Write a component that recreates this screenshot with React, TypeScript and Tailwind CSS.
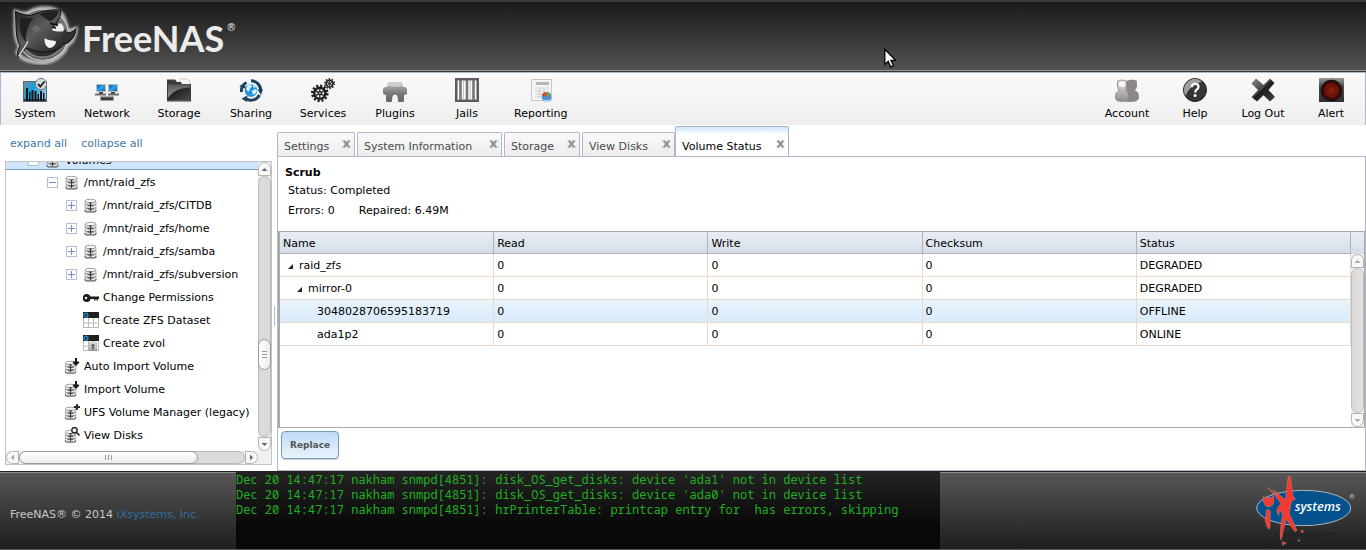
import React from "react";

type Kids = { children: React.ReactNode };

/* ---------- header artwork ---------- */

function SharkLogo() {
  return (
    <svg width="70" height="63" viewBox="30 10 210 189" aria-hidden="true">
      <defs>
        <linearGradient id="disc" x1="0" y1="0" x2="0" y2="1">
          <stop offset="0" stopColor="#6a6a6a" />
          <stop offset="1" stopColor="#262626" />
        </linearGradient>
        <linearGradient id="body" x1="0" y1="0" x2="1" y2="1">
          <stop offset="0" stopColor="#222" />
          <stop offset="0.4" stopColor="#5c5c5c" />
          <stop offset="0.75" stopColor="#2c2c2c" />
          <stop offset="1" stopColor="#161616" />
        </linearGradient>
        <filter id="glow" x="-20%" y="-20%" width="140%" height="140%">
          <feGaussianBlur stdDeviation="4" />
        </filter>
      </defs>
      <g filter="url(#glow)" fill="none" stroke="#e8e8e8" strokeWidth="9">
        <path d="M46 38 C60 44 76 46 86 42 C110 24 160 22 184 44 C194 60 200 76 202 98 L228 90 C226 116 214 134 202 138 C192 174 152 192 124 192 C92 192 62 180 52 162 L60 144 C40 118 48 70 46 38 Z" />
      </g>
      <circle cx="128" cy="108" r="77" fill="url(#disc)" stroke="#c4c4c4" strokeWidth="4" />
      <circle cx="128" cy="108" r="69" fill="none" stroke="#7a7a7a" strokeWidth="8" />
      <path
        d="M46 38 C64 48 80 50 94 50 C120 38 150 32 182 34 C184 50 176 62 168 72 C184 84 194 94 200 102 C210 104 220 98 228 90 C226 116 208 134 192 136 C184 150 160 160 138 160 C112 160 96 154 80 148 C70 154 62 164 54 178 C50 160 56 150 60 142 C44 116 50 70 46 38 Z"
        fill="url(#body)"
        stroke="#0c0c0c"
        strokeWidth="3"
      />
      <path d="M62 54 C76 58 92 60 102 58 C84 76 76 102 78 130 C60 112 56 80 62 54 Z" fill="#202020" />
      <path d="M118 46 C140 38 160 36 176 38 C172 54 160 64 150 68 C138 62 126 52 118 46 Z" fill="#222" />
      <path d="M156 94 C160 84 172 72 182 74 C190 80 194 90 190 98 C178 100 164 98 156 94 Z" fill="#ececec" />
      <path d="M150 74 L174 80 M156 84 L168 88" stroke="#161616" strokeWidth="6" />
      <path d="M134 118 C142 126 158 124 168 128 C168 140 158 148 148 148 C138 144 132 132 134 118 Z" fill="#f4f4f4" />
      <path d="M192 104 C206 112 220 104 227 94 C224 116 208 130 190 130 C182 122 184 112 192 104 Z" fill="#303030" />
      <path d="M96 86 L108 102 M102 82 L114 98 M108 80 L118 92" stroke="#8a8a8a" strokeWidth="3" />
      <path d="M56 174 C64 158 76 146 84 128" stroke="#e0e0e0" strokeWidth="4" fill="none" />
    </svg>
  );
}

function Pointer() {
  return (
    <svg className="absolute left-[884px] top-[48px]" width="13" height="20" viewBox="0 0 13 20" aria-hidden="true">
      <path d="M.8 1.2 V16.4 L4.2 13.4 L6.6 18.8 L9.4 17.6 L7 12.4 H11.6 Z" fill="#fff" stroke="#000" strokeWidth="1.3" />
    </svg>
  );
}

/* ---------- toolbar icons, 24 by 24 ---------- */

function Icon({ children }: Kids) {
  return (
    <svg width="24" height="24" viewBox="0 0 24 24" aria-hidden="true">
      {children}
    </svg>
  );
}

const SystemIcon = () => (
  <Icon>
    <defs>
      <linearGradient id="sys" x1="0" y1="0" x2="1" y2="0.6">
        <stop offset="0" stopColor="#7d8c99" />
        <stop offset="0.45" stopColor="#12a0dc" />
        <stop offset="1" stopColor="#9ccbe4" />
      </linearGradient>
    </defs>
    <rect x="0.5" y="3.5" width="23" height="20" fill="url(#sys)" stroke="#5a6672" />
    <path d="M3 23V10h2v13zM6 23v-9h1.500v9zM8.500 23v-11h2v11zM11.500 23V13h2v10zM14.500 23v-7H16v7zM17 23V13h2v10zM20 23v-8h1.500v8z" fill="#10151a" />
    <path d="M1 21h22v2H1z" fill="#10151a" opacity=".7" />
    <circle cx="18" cy="6" r="5.600" fill="#d9dde0" stroke="#70767c" />
    <path d="M15 6l2.300 2.600L21.500 3.500" stroke="#222" strokeWidth="1.900" fill="none" />
  </Icon>
);

const NetworkIcon = () => (
  <Icon>
    <defs>
      <linearGradient id="scr" x1="0" y1="0" x2="1" y2="1">
        <stop offset="0" stopColor="#0f4f86" />
        <stop offset="0.5" stopColor="#2aa5ea" />
        <stop offset="1" stopColor="#0b62a0" />
      </linearGradient>
    </defs>
    <rect x="1.500" y="6.500" width="9" height="7" fill="url(#scr)" stroke="#b9bdc1" />
    <rect x="13.500" y="6.500" width="9" height="7" fill="url(#scr)" stroke="#b9bdc1" />
    <path d="M4 14h4v2H4zM16 14h4v2h-4z" fill="#444" />
    <path d="M0 15.500h11v2H0zM13 15.500h11v2H13z" fill="#6c6c6c" />
    <path d="M5 18h14v1H5z" fill="#aaa" />
    <rect x="5.500" y="19" width="13" height="3.500" fill="#3b3b3b" stroke="#aaa" strokeWidth=".7" />
  </Icon>
);

const StorageIcon = () => (
  <Icon>
    <defs>
      <linearGradient id="fold" x1="0" y1="0" x2="0" y2="1">
        <stop offset="0" stopColor="#5a5a5a" />
        <stop offset="1" stopColor="#a2a2a2" />
      </linearGradient>
      <linearGradient id="foldDark" x1="0" y1="0" x2="1" y2="1">
        <stop offset="0" stopColor="#111" />
        <stop offset="1" stopColor="#4a4a4a" />
      </linearGradient>
    </defs>
    <path d="M13 1l5-.5 5 2v6H13z" fill="#f4f4f4" stroke="#c9c9c9" strokeWidth=".8" />
    <path d="M0 1.500h8l2 2.500h4l1 2h9v17.500H0z" fill="#3c3c3c" />
    <path d="M1 6.500h22V22.500H1z" fill="url(#fold)" />
    <path d="M1 20C5 14 11 10 23 9.500v13H1z" fill="url(#foldDark)" />
  </Icon>
);

const SharingIcon = () => (
  <Icon>
    <circle cx="12" cy="12.500" r="6.300" fill="#2593d4" />
    <path d="M7 10.500q2-4 5-4l1 2-2 2-1 3-2-1zM13 13l3-2 2 1-1 3-3 2zM14 7l3 1.500-1 1.500-2-1z" fill="#d8f0fb" />
    <g fill="none" stroke="#1d4260" strokeWidth="3">
      <path d="M2.500 14a9.700 9.700 0 0 1 5-9.500" />
      <path d="M12 2.800a9.700 9.700 0 0 1 9.700 9.500" />
      <path d="M20.500 17a9.700 9.700 0 0 1-14 3.500" />
    </g>
    <path d="M0 8l5.500-2.500L7 11zM18.500 11.500h5.500l-2 5.500zM8.500 17.500l-1 6.500-5-3.500z" fill="#1d4260" />
  </Icon>
);

const ServicesIcon = () => (
  <Icon>
    <circle cx="8.800" cy="15.300" r="7.500" fill="none" stroke="#222" strokeWidth="2.600" strokeDasharray="2.200 1.730" />
    <circle cx="8.800" cy="15.300" r="5.600" fill="#e9e9e9" stroke="#1f1f1f" strokeWidth="2.400" />
    <path d="M8.800 10.500v9.600M4.600 12.900l8.400 4.800M4.600 17.700l8.400-4.800" stroke="#333" strokeWidth="1.400" />
    <circle cx="8.800" cy="15.300" r="1.700" fill="#999" stroke="#111" />
    <circle cx="18.500" cy="5.600" r="4.600" fill="none" stroke="#333" strokeWidth="1.900" strokeDasharray="1.500 1.390" />
    <circle cx="18.500" cy="5.600" r="3.400" fill="#ddd" stroke="#222" strokeWidth="1.600" />
    <path d="M18.500 2.500v6.200M15.800 4l5.400 3.200M15.800 7.200L21.200 4" stroke="#444" strokeWidth="1" />
    <circle cx="18.500" cy="5.600" r="1.100" fill="#222" />
  </Icon>
);

const PluginsIcon = () => (
  <Icon>
    <defs>
      <linearGradient id="plug" x1="0" y1="0" x2="0" y2="1">
        <stop offset="0" stopColor="#b9b9b9" />
        <stop offset="0.600" stopColor="#777" />
        <stop offset="1" stopColor="#666" />
      </linearGradient>
    </defs>
    <path d="M5 5q0-1 1.500-1h11Q19 4 19 5l.8 4h2q2.200 0 2.200 2.200v3.600Q24 17 21 17v5.500q0 1.500-1.500 1.500H16q-1 0-1-1.500 0-6-3-6t-3 6Q9 24 8 24H4.500Q3 24 3 22.500V17q-3 0-3-2.200v-3.600Q0 9 2.200 9h2z" fill="url(#plug)" />
    <path d="M5 5q0-1 1.500-1h11Q19 4 19 5l.4 3q-7 2-14.800 0z" fill="#d6d6d6" opacity=".8" />
  </Icon>
);

const JailsIcon = () => (
  <Icon>
    <rect x="1" y="1" width="22" height="22" fill="#fafafa" stroke="#5a5c60" strokeWidth="2.200" />
    <rect x="2.500" y="2.500" width="19" height="19" fill="none" stroke="#a9abaf" />
    <path d="M5.500 2v20M12 2v20M18.500 2v20" stroke="#74767a" strokeWidth="2.600" />
    <path d="M8.500 3v18M15.200 3v18" stroke="#c2c4c7" strokeWidth="1" />
  </Icon>
);

const ReportingIcon = () => (
  <Icon>
    <path d="M2.500 1.500h20v21h-20z" fill="#f4f4f4" stroke="#c4c6c8" />
    <path d="M7 4h13v3H7z" fill="#b5b7ba" />
    <path d="M6 10h14M6 13h14M6 16h7M6 19h7M10.500 10v10M15 10v4" stroke="#cfd1d3" strokeWidth="1.200" />
    <circle cx="17.500" cy="19" r="4.800" fill="#4a92dc" />
    <path d="M17.500 19L12.700 17.500q1-3.400 4.800-3.400z" fill="#e2462f" />
    <path d="M17.500 19v-4.900q3.200 0 4.700 3.200z" fill="#54a844" />
    <path d="M13.700 21.500q3.800 1.200 7.600 0-1.400 2.200-3.800 2.200t-3.800-2.200z" fill="#bde0fa" />
  </Icon>
);

const AccountIcon = () => (
  <Icon>
    <defs>
      <linearGradient id="acc" x1="0" y1="0" x2="0" y2="1">
        <stop offset="0" stopColor="#e4e4e4" />
        <stop offset="1" stopColor="#8d8d8d" />
      </linearGradient>
    </defs>
    <path d="M12 3q5-2 9.500 0v6q-1 3-2 3.500 4 1.500 4 5v3q-1 3-6 3h-6z" fill="#8f8686" stroke="#777" strokeWidth=".6" />
    <path d="M2.500 3Q7 1 11.500 3v6q-1 3-1.500 3.500 4 1.500 4 5v3q-1 3-7 3t-6.500-3v-3q0-3.500 4-5-1.500-.5-2-3.500z" fill="url(#acc)" stroke="#7c7c7c" strokeWidth=".7" />
    <path d="M4 4q3-1.200 6 0v4q-3 2-6 0z" fill="#f5f5f5" />
  </Icon>
);

const HelpIcon = () => (
  <Icon>
    <circle cx="12" cy="12" r="11.500" fill="#343638" stroke="#222" />
    <path d="M1 12A11 11 0 0 1 19 3.500Q7 7 2.500 17.500 1 15 1 12z" fill="#b9bbbd" opacity=".8" />
    <path d="M8.800 9.200q0-3.400 3.400-3.400t3.300 3q0 1.600-1.800 2.800-1.500 1-1.500 2.800" fill="none" stroke="#fff" strokeWidth="2.300" />
    <circle cx="12.100" cy="17.600" r="1.500" fill="#fff" />
  </Icon>
);

const LogOutIcon = () => (
  <Icon>
    <defs>
      <linearGradient id="xo" x1="0" y1="0" x2="0.900" y2="0.900">
        <stop offset="0" stopColor="#8a8a8a" />
        <stop offset="0.500" stopColor="#4a4645" />
        <stop offset="0.510" stopColor="#1f1d1d" />
        <stop offset="1" stopColor="#3c3a3a" />
      </linearGradient>
    </defs>
    <path d="M5 .5l7.500 6.500L19 .5l4.500 4.500-6 7 6.500 7-5 4.500-6.500-6.200L6 23.500 .5 19l6.500-7L.5 5.500z" fill="url(#xo)" />
  </Icon>
);

const AlertIcon = () => (
  <svg width="25" height="24" viewBox="0 0 25 24" aria-hidden="true">
    <defs>
      <radialGradient id="led">
        <stop offset="0" stopColor="#8c2a08" />
        <stop offset="0.650" stopColor="#5e0b06" />
        <stop offset="1" stopColor="#380404" />
      </radialGradient>
      <linearGradient id="plate" x1="0" y1="0" x2="0" y2="1">
        <stop offset="0" stopColor="#9a9a9a" />
        <stop offset="0.350" stopColor="#4a4a4c" />
        <stop offset="1" stopColor="#303032" />
      </linearGradient>
    </defs>
    <rect width="25" height="24" fill="url(#plate)" />
    <circle cx="12.500" cy="12.500" r="10" fill="url(#led)" stroke="#161212" strokeWidth="1.500" />
    <circle cx="12.500" cy="12.500" r="6" fill="none" stroke="#8e2c12" strokeWidth=".8" opacity=".7" />
  </svg>
);

/* ---------- tree icons, 16 by 16 ---------- */

type Badge = "down" | "plus" | "lens";

function DiskShape() {
  return (
    <>
      <path d="M2 3v10.500h11V3z" fill="#e4e4e4" stroke="#a8a8a8" strokeWidth=".8" />
      <ellipse cx="7.500" cy="3" rx="5.500" ry="1.700" fill="#f8f8f8" stroke="#8a8a8a" strokeWidth=".8" />
      <path d="M2 6.500q5.500 1.600 11 0M2 10q5.500 1.600 11 0" fill="none" stroke="#8a8a8a" strokeWidth=".9" />
      <path d="M7.500 4.500v8.500M4.500 7.800h6M4.500 11h6M6 5h3" stroke="#3a3a3a" strokeWidth="1.100" />
      <path d="M2 12q0 2 1 2h9q1 0 1-2" fill="none" stroke="#555" strokeWidth="1" />
    </>
  );
}

function DiskIcon({ badge }: { badge?: Badge }) {
  return (
    <svg width="16" height="16" viewBox="0 0 16 16" aria-hidden="true">
      {badge ? (
        <g transform="translate(-0.500 2) scale(0.940)">
          <DiskShape />
        </g>
      ) : (
        <g transform="translate(0 1)">
          <DiskShape />
        </g>
      )}
      {badge === "down" && <path d="M12 0v6M9.300 3.700L12 6.500l2.700-2.800" stroke="#1a1a1a" strokeWidth="2" fill="none" />}
      {badge === "plus" && <path d="M13 0v6M10 3h6" stroke="#2a2a2a" strokeWidth="1.900" />}
      {badge === "lens" && (
        <>
          <circle cx="10.500" cy="3.300" r="2.700" fill="#eef2f4" stroke="#222" strokeWidth="1.300" />
          <path d="M12.500 5.500l3 3" stroke="#222" strokeWidth="1.700" />
        </>
      )}
    </svg>
  );
}

const KeyIcon = () => (
  <svg width="16" height="16" viewBox="0 0 16 16" aria-hidden="true">
    <path d="M4 5a4 4 0 0 1 3.600 2.500H16V10h-1v1.500h-1.500V10h-1v1.500H11V10H7.600A4 4 0 1 1 4 5z" fill="#1c1c1c" />
    <circle cx="3" cy="9" r="1.200" fill="#fff" />
  </svg>
);

function GridIcon({ disk }: { disk?: boolean }) {
  return (
    <svg width="16" height="16" viewBox="0 0 16 16" aria-hidden="true">
      <rect x=".5" y=".5" width="15" height="15" fill="#fff" stroke="#bbb" />
      <path d="M0 11h16M5.500 6v10M10.500 6v10" stroke="#bbb" />
      <path d="M0 0h16v6H0z" fill="#231f20" />
      <circle cx="3" cy="3.200" r="1.900" fill="none" stroke="#1a93c4" strokeWidth="1.400" />
      {disk && (
        <g transform="translate(5 6) scale(0.660)">
          <DiskShape />
        </g>
      )}
    </svg>
  );
}

/* ---------- scroll bars ---------- */

type Dir = "up" | "down" | "left" | "right";
const arrows: Record<Dir, string> = {
  up: "M1.500 6L4.500 3 7.500 6z",
  down: "M1.500 3L4.500 6 7.500 3z",
  left: "M6 1.500L3 4.500 6 7.500z",
  right: "M3 1.500L6 4.500 3 7.500z",
};
const arrowShape: Record<Dir, string> = {
  up: "h-[14px] w-full rounded-t-full",
  down: "h-[14px] w-full rounded-b-full",
  left: "h-full w-[13px] rounded-l-full",
  right: "h-full w-[13px] rounded-r-full",
};

function ScrollArrow({ dir, dim }: { dir: Dir; dim?: boolean }) {
  return (
    <button
      aria-label={"Scroll " + dir}
      className={`flex shrink-0 items-center justify-center border border-[#b4b4b4] bg-[#f8f8f7] ${arrowShape[dir]}`}
    >
      <svg width="9" height="9" viewBox="0 0 9 9" aria-hidden="true">
        <path d={arrows[dir]} fill={dim ? "#a5a5a5" : "#666"} />
      </svg>
    </button>
  );
}

/* ---------- tree ---------- */

type Node = { level: number; label: string; icon: React.ReactNode; toggle?: "+" | "-"; selected?: boolean };

const nodes: Node[] = [
  { level: 0, label: "Volumes", icon: <DiskIcon />, toggle: "-", selected: true },
  { level: 1, label: "/mnt/raid_zfs", icon: <DiskIcon />, toggle: "-" },
  { level: 2, label: "/mnt/raid_zfs/CITDB", icon: <DiskIcon />, toggle: "+" },
  { level: 2, label: "/mnt/raid_zfs/home", icon: <DiskIcon />, toggle: "+" },
  { level: 2, label: "/mnt/raid_zfs/samba", icon: <DiskIcon />, toggle: "+" },
  { level: 2, label: "/mnt/raid_zfs/subversion", icon: <DiskIcon />, toggle: "+" },
  { level: 2, label: "Change Permissions", icon: <KeyIcon /> },
  { level: 2, label: "Create ZFS Dataset", icon: <GridIcon /> },
  { level: 2, label: "Create zvol", icon: <GridIcon disk /> },
  { level: 1, label: "Auto Import Volume", icon: <DiskIcon badge="down" /> },
  { level: 1, label: "Import Volume", icon: <DiskIcon badge="down" /> },
  { level: 1, label: "UFS Volume Manager (legacy)", icon: <DiskIcon badge="plus" /> },
  { level: 1, label: "View Disks", icon: <DiskIcon badge="lens" /> },
];

const indents = ["pl-[22px]", "pl-[41px]", "pl-[60px]"];

function TreeRow({ node }: { node: Node }) {
  return (
    <li
      className={`flex h-[23px] items-center whitespace-nowrap first:-mt-[15px] ${indents[node.level]} ${
        node.selected ? "bg-[#cfe5fa] pt-[3px] shadow-[inset_0_-1px_#759dc0]" : "pt-px"
      }`}
    >
      <span className="mr-[5px] flex w-3 shrink-0">
        {node.toggle && (
          <button
            aria-label={(node.toggle === "+" ? "Expand " : "Collapse ") + node.label}
            className="flex h-[11px] w-[11px] items-center justify-center border border-[#b4bfdc] bg-white"
          >
            <svg width="7" height="7" viewBox="0 0 7 7" aria-hidden="true">
              <path d={node.toggle === "+" ? "M0 3.500h7M3.500 0v7" : "M0 3.500h7"} stroke="#6f8fc4" />
            </svg>
          </button>
        )}
      </span>
      <span className="mr-1 shrink-0">{node.icon}</span>
      <a href="#" className="pt-px leading-4">{node.label}</a>
    </li>
  );
}

function Sidebar() {
  return (
    <aside className="flex w-[277px] shrink-0 flex-col pl-[5px]">
      <div className="flex h-9 items-center gap-[14px] pl-[5px] pt-[2px] text-[#3f77a8]">
        <a href="#">expand all</a>
        <a href="#">collapse all</a>
      </div>
      <div className="flex flex-1 items-center">
        <div className="mb-[6px] flex w-[267px] flex-col self-stretch border border-[#c4c4c4]">
          <div className="flex flex-1">
            <ul className="flex-1 overflow-hidden">
              {nodes.map((n) => (
                <TreeRow key={n.label} node={n} />
              ))}
            </ul>
            <div className="flex w-[13px] flex-col bg-[#f0f0ef]">
              <ScrollArrow dir="up" />
              <div className="flex flex-1 flex-col rounded-full border border-[#b9b9b9] bg-[#dcdbda]">
                <div className="flex-[163]" />
                <div className="-mx-px flex h-[31px] flex-col items-center justify-center gap-[2px] rounded-full border border-[#999] bg-linear-to-r from-white to-[#eeedec]">
                  <i className="h-px w-[5px] bg-[#999]" />
                  <i className="h-px w-[5px] bg-[#999]" />
                  <i className="h-px w-[5px] bg-[#999]" />
                </div>
                <div className="flex-[66]" />
              </div>
              <ScrollArrow dir="down" />
            </div>
          </div>
          <div className="flex h-[13px] bg-[#f0f0ef] pr-[13px]">
            <ScrollArrow dir="left" dim />
            <div className="flex flex-1 rounded-full border border-[#b9b9b9] bg-[#dcdbda]">
              <div className="-my-px -ml-px flex w-4/5 items-center justify-center gap-[2px] rounded-full border border-[#999] bg-linear-to-b from-white to-[#eeedec]">
                <i className="h-[5px] w-px bg-[#999]" />
                <i className="h-[5px] w-px bg-[#999]" />
                <i className="h-[5px] w-px bg-[#999]" />
              </div>
            </div>
            <ScrollArrow dir="right" />
          </div>
        </div>
        <div className="ml-[2px] h-5 w-px bg-[#b5bccf]" />
      </div>
    </aside>
  );
}

/* ---------- tabs and table ---------- */

const tabs: [string, string][] = [
  ["Settings", "min-w-[78px]"],
  ["System Information", "min-w-[145px]"],
  ["Storage", "min-w-[76px]"],
  ["View Disks", "min-w-[93px]"],
  ["Volume Status", "min-w-[114px]"],
];

function Tab({ label, width, active }: { label: string; width: string; active?: boolean }) {
  return (
    <div
      className={`flex justify-between rounded-t-[2px] border border-b-0 border-[#b0b7cb] pl-[6px] pr-[3px] ${width} ${
        active
          ? "-ml-[2px] h-[31px] bg-white bg-linear-to-b from-[#cfe5fa] to-white to-25% pt-3 text-black"
          : "mb-px h-6 bg-linear-to-b from-[#fafafa] to-[#ececec] pt-[6px] text-[#4a4a4a]"
      }`}
    >
      <button role="tab" aria-selected={!!active} className="h-4 leading-4">
        {label}
      </button>
      <button aria-label={"Close " + label} className="h-[9px]">
        <svg width="9" height="8" viewBox="0 0 9 8" aria-hidden="true">
          <path d="M2 1l5 6M7 1l-5 6" stroke="#8b95a5" strokeWidth="2.200" />
          <path d="M.5 1h3M5.500 1h3M.5 7h3M5.500 7h3" stroke="#8b95a5" strokeWidth="1" />
        </svg>
      </button>
    </div>
  );
}

const columns = ["Name", "Read", "Write", "Checksum", "Status"];
const rows = [
  { name: "raid_zfs", pad: "pl-2", open: true, status: "DEGRADED" },
  { name: "mirror-0", pad: "pl-[17px]", open: true, status: "DEGRADED" },
  { name: "3048028706595183719", pad: "pl-[37px]", hot: true, status: "OFFLINE" },
  { name: "ada1p2", pad: "pl-[37px]", status: "ONLINE" },
];

const cell = "h-[23px] border-b border-r border-[#ecd9c9] p-0 pt-[2px] leading-4";

function VolumeTable() {
  return (
    <div className="flex flex-1 border border-l-2 border-[#aaaaaa]">
      <div className="flex-1">
        <table className="w-full table-fixed border-separate border-spacing-0">
          <thead>
            <tr className="bg-linear-to-b from-[#e9eef3] to-[#d3dde8]">
              {columns.map((c) => (
                <th key={c} className="h-[22px] border-b border-r border-[#b2b2b2] p-0 pl-[3px] pt-[2px] text-left font-normal leading-4">
                  {c}
                </th>
              ))}
            </tr>
          </thead>
          <tbody>
            {rows.map((r) => (
              <tr key={r.name} className={r.hot ? "bg-linear-to-b from-[#e9f4fe] to-[#d8e9fa]" : "bg-white"}>
                <td className={`${cell} ${r.pad}`}>
                  <span className="flex items-center">
                    {r.open && (
                      <svg className="mr-[6px]" width="5" height="5" viewBox="0 0 5 5" aria-hidden="true">
                        <path d="M5 0V5H0z" fill="#222" />
                      </svg>
                    )}
                    {r.name}
                  </span>
                </td>
                <td className={`${cell} pl-[3px]`}>0</td>
                <td className={`${cell} pl-[3px]`}>0</td>
                <td className={`${cell} pl-[3px]`}>0</td>
                <td className={`${cell} pl-[3px]`}>{r.status}</td>
              </tr>
            ))}
          </tbody>
        </table>
      </div>
      <div className="flex w-[13px] flex-col bg-[#f0f0ef]">
        <div className="h-[22px] bg-linear-to-b from-[#e9eef3] to-[#d3dde8]" />
        <ScrollArrow dir="up" dim />
        <div className="flex-1 rounded-full border border-[#bdbdbd] bg-linear-to-r from-[#dad9d8] to-[#e4e3e2]" />
        <ScrollArrow dir="down" dim />
      </div>
    </div>
  );
}

/* ---------- footer logo ---------- */

function VendorLogo() {
  return (
    <svg width="110" height="77" viewBox="120 24 330 231" role="img" aria-label="iXsystems">
      <ellipse cx="288" cy="207" rx="95" ry="9" fill="#222" opacity=".45" />
      <ellipse cx="281" cy="129" rx="141" ry="53" fill="#04518c" stroke="#a9b6c2" strokeWidth="3" />
      <g fill="#f23a30" stroke="#c9a09c" strokeWidth="1">
        <path d="M160 94 L170 100 Q178 96 184 98 L191 92 Q194 112 188 120 Q178 130 166 122 Q158 114 160 94 Z" />
        <path d="M168 136 Q178 132 181 138 L180 188 Q175 198 170 182 L165 166 Q170 150 168 136 Z" />
        <path d="M171 67 Q190 80 202 92 L190 74 Q212 92 226 104 L231 60 L234 36 Q241 28 243 46 L249 94 L257 102 Q243 106 242 120 L238 146 L261 196 Q257 205 250 194 L229 162 Q220 190 217 212 L213 226 L210 212 Q212 176 218 148 L210 134 L206 152 L200 138 L206 122 L214 118 Q196 90 171 67 Z" />
        <path d="M272 199 L277 195 L281 199 L277 204 Z M216 230 L229 234 L218 241 Z M264 224 L270 226 L266 230 Z" />
      </g>
      <text x="254" y="139" fill="#fff" fontFamily="Open Sans" fontSize="38" fontStyle="italic" fontWeight="600">
        systems
      </text>
      <circle cx="426" cy="94" r="6" fill="none" stroke="#aaa" strokeWidth="2.500" />
      <path d="M424 97v-6h3l1 3h-3l3 3" stroke="#bbb" strokeWidth="1.500" fill="none" />
    </svg>
  );
}

/* ---------- page ---------- */

const leftMenu: [string, React.ReactNode][] = [
  ["System", <SystemIcon />],
  ["Network", <NetworkIcon />],
  ["Storage", <StorageIcon />],
  ["Sharing", <SharingIcon />],
  ["Services", <ServicesIcon />],
  ["Plugins", <PluginsIcon />],
  ["Jails", <JailsIcon />],
  ["Reporting", <ReportingIcon />],
];
const rightMenu: [string, React.ReactNode][] = [
  ["Account", <AccountIcon />],
  ["Help", <HelpIcon />],
  ["Log Out", <LogOutIcon />],
  ["Alert", <AlertIcon />],
];

const log = [
  "Dec 20 14:47:17 nakham snmpd[4851]: disk_OS_get_disks: device 'ada1' not in device list",
  "Dec 20 14:47:17 nakham snmpd[4851]: disk_OS_get_disks: device 'ada0' not in device list",
  "Dec 20 14:47:17 nakham snmpd[4851]: hrPrinterTable: printcap entry for  has errors, skipping",
];

export default function App() {
  return (
    <div className="relative flex min-h-screen flex-col bg-white font-['DejaVu_Sans',sans-serif] text-[11px] leading-4 text-black">
      <header className="flex h-[72px] border-b border-t-2 border-b-[#33343a] border-t-[#3a3a3a] bg-linear-to-b from-[#1b1b1b] to-[#535353] pl-[10px] shadow-[inset_0_-1px_#98988f]">
        <SharkLogo />
        <div className="ml-[2px] flex items-start text-[#ececec]">
          <span className="mt-[6px] font-['Lato',sans-serif] text-[36px] font-bold leading-[60px]">FreeNAS</span>
          <span className="ml-[2px] mt-[18px] text-[10px] leading-4">®</span>
        </div>
      </header>
      <Pointer />

      <nav className="flex h-[53px] justify-between border-t border-[#b0b7cb] bg-linear-to-b from-[#fafafa] to-[#eeeeee] shadow-[inset_1px_0_#b0b7cb,inset_-1px_0_#b0b7cb]">
        <div className="-ml-px flex">
          {leftMenu.map(([label, icon]) => (
            <button key={label} className="flex min-w-[72px] flex-col items-center gap-1 px-[11px] pt-[5px]">
              {icon}
              {label}
            </button>
          ))}
        </div>
        <div className="mr-px flex">
          {rightMenu.map(([label, icon]) => (
            <button key={label} className="flex w-[68px] flex-col items-center gap-1 pt-[5px]">
              {icon}
              {label}
            </button>
          ))}
        </div>
      </nav>

      <div className="flex flex-1">
        <Sidebar />
        <main className="flex min-w-0 flex-1 flex-col">
          <div role="tablist" className="-mb-px flex h-8 items-end gap-[2px]">
            {tabs.map(([t, width]) => (
              <Tab key={t} label={t} width={width} active={t === "Volume Status"} />
            ))}
          </div>
          <section className="-z-0 flex flex-1 flex-col border border-[#b0b7cb] pt-[6px]">
            <h1 className="pl-[7px] pt-px text-[11px] font-bold leading-[18px]">Scrub</h1>
            <p className="pl-[10px] leading-[18px]">Status: Completed</p>
            <p className="flex gap-6 pl-[10px] pt-[2px] leading-[18px]">
              <span>Errors: 0</span>
              <span>Repaired: 6.49M</span>
            </p>
            <div className="mt-[11px] flex flex-1">
              <VolumeTable />
            </div>
            <div className="px-[3px] pb-[11px] pt-[3px]">
              <button className="h-7 rounded-[4px] border border-[#759dc0] bg-linear-to-b from-[#bfdbf5] to-[#eaf3fc] px-2 text-[9px] font-bold text-[#555] shadow-[0_1px_1px_rgba(0,0,0,0.2)]">
                Replace
              </button>
            </div>
          </section>
        </main>
      </div>

      <footer className="flex h-[79px] border-b border-t border-b-[#555] border-t-[#222] bg-linear-to-b from-[#585858] to-[#1f1f1f] shadow-[inset_0_1px_#8b8e88]">
        <p className="w-[236px] shrink-0 self-center pl-[10px] pt-[8px] text-[#c8c8c8]">
          FreeNAS® © 2014{" "}
          <a href="#" className="text-[#2f6fa3]">
            iXsystems, Inc.
          </a>
        </p>
        <div className="w-[704px] overflow-hidden whitespace-pre bg-linear-to-b from-[#242424] to-[#080808] to-70% font-['Noto_Sans_Mono','Droid_Sans_Mono','Liberation_Mono',monospace] text-[12px] leading-[15px] text-[#1fb01f]">
          {log.map((l) => (
            <div key={l}>{l}</div>
          ))}
        </div>
        <div className="ml-auto mr-[6px] mt-px">
          <VendorLogo />
        </div>
      </footer>
    </div>
  );
}
